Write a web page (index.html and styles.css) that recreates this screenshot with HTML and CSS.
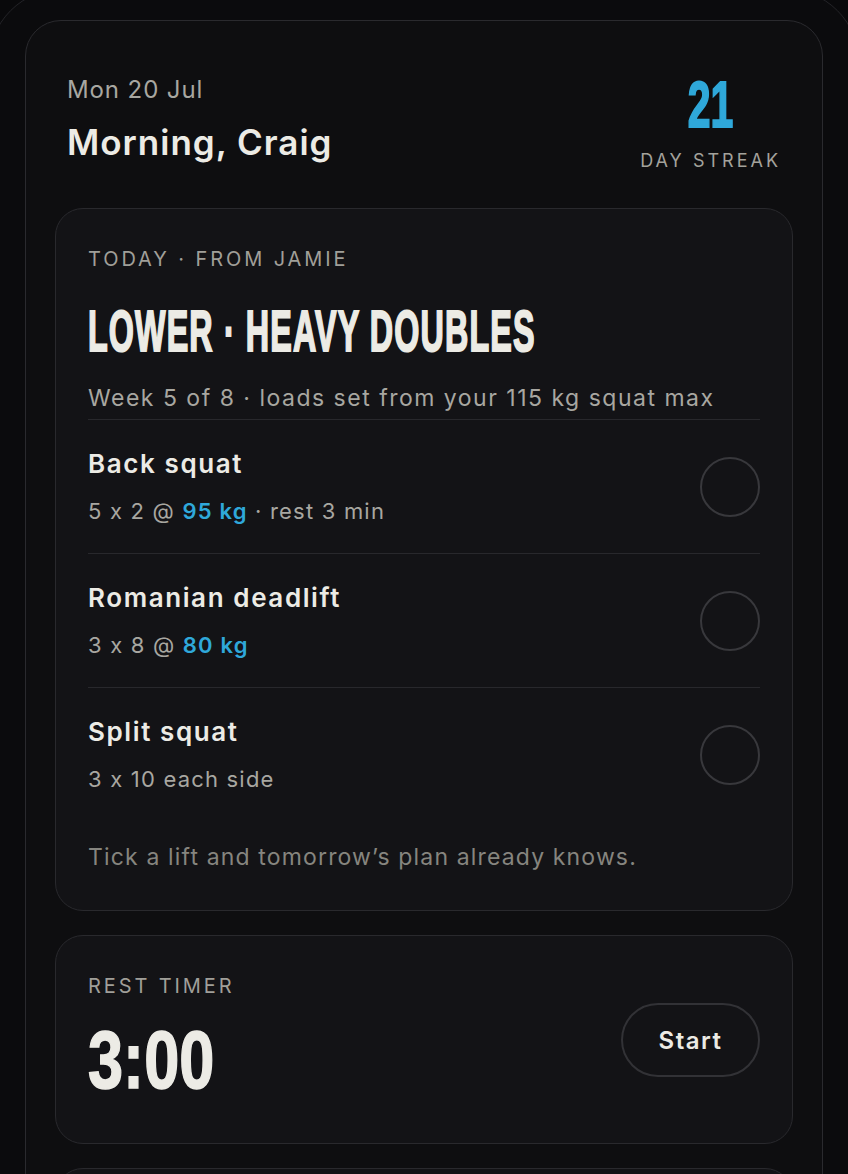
FILE: index.html
```html
<!DOCTYPE html>
<html lang="en">

<head>
  <meta charset="UTF-8">
  <meta name="viewport" content="width=device-width, initial-scale=1.0">
  <title>Today</title>
  <link rel="stylesheet" href="styles.css">
</head>

<body>
  <div class="device">
    <div class="screen">
      <header class="top">
        <div class="greeting">
          <div class="date">Mon 20 Jul</div>
          <h1 class="hello">Morning, Craig</h1>
        </div>
        <div class="streak">
          <div class="streak-num"><span class="display">21</span></div>
          <div class="streak-label">DAY STREAK</div>
        </div>
      </header>

      <section class="card today">
        <div class="eyebrow">TODAY · FROM JAMIE</div>
        <h2 class="workout-title"><span class="display">LOWER · HEAVY DOUBLES</span></h2>
        <p class="workout-meta">Week 5 of 8 · loads set from your 115 kg squat max</p>

        <div class="lift">
          <div>
            <div class="lift-name">Back squat</div>
            <div class="lift-detail">5 x 2 @ <b class="load">95 kg</b> · rest 3 min</div>
          </div>
          <span class="tick"></span>
        </div>
        <div class="lift">
          <div>
            <div class="lift-name">Romanian deadlift</div>
            <div class="lift-detail">3 x 8 @ <b class="load">80 kg</b></div>
          </div>
          <span class="tick"></span>
        </div>
        <div class="lift">
          <div>
            <div class="lift-name">Split squat</div>
            <div class="lift-detail">3 x 10 each side</div>
          </div>
          <span class="tick"></span>
        </div>

        <p class="note">Tick a lift and tomorrow’s plan already knows.</p>
      </section>

      <section class="card timer">
        <div>
          <div class="eyebrow">REST TIMER</div>
          <div class="timer-time"><span class="display">3:00</span></div>
        </div>
        <button class="btn">Start</button>
      </section>

      <section class="card next"></section>
    </div>
  </div>
</body>

</html>
```

FILE: styles.css
```css
body {
  margin: 0;
  background: #09090b;
  font-family: "Inter", "Noto Sans", sans-serif;
  font-feature-settings: "calt" 0;
  color: #ecebe5;
  overflow: hidden;
}

.device {
  margin: -12px -12px 0;
  padding: 31px 36px 0;
  border: 1px solid #242428;
  border-radius: 76px;
  background: #0b0b0d;
}

.screen {
  min-height: 1300px;
  padding: 0 29px;
  border: 1px solid #2a2a2e;
  border-radius: 36px;
  background: #0e0e10;
}

/* condensed display type for big numbers and titles */
.display {
  display: inline-block;
  white-space: nowrap;
  font-family: "Liberation Sans Narrow", "Liberation Sans", sans-serif;
  font-weight: 700;
  letter-spacing: 0;
  transform-origin: left center;
}

.top {
  display: flex;
  justify-content: space-between;
  align-items: flex-start;
  padding: 53px 12px 0;
  margin-bottom: 36px;
}

.date {
  font-size: 24px;
  line-height: 1.3;
  letter-spacing: 0.9px;
  color: #a8a7a1;
}

.hello {
  margin: 16px 0 0;
  font-size: 35px;
  line-height: 1.2;
  letter-spacing: 1px;
  font-weight: 600;
}

.streak {
  display: flex;
  flex-direction: column;
  align-items: center;
}

.streak-num {
  margin-top: -2px;
  margin-bottom: 2px;
  font-size: 64px;
  line-height: 1;
  color: #2fa8da;
}

.streak-num .display {
  transform-origin: center;
  transform: scaleX(0.64);
  -webkit-text-stroke: 2px currentColor;
}

.streak-label {
  margin-top: 10px;
  font-size: 18px;
  line-height: 1.3;
  letter-spacing: 3px;
  color: #a3a29c;
}

.card {
  border: 1px solid #29292d;
  border-radius: 28px;
  background: #131316;
  margin-bottom: 24px;
}

.eyebrow {
  font-size: 20px;
  line-height: 1.4;
  letter-spacing: 2.9px;
  color: #a09f99;
}

.today {
  padding: 36px 32px 37px;
}

.workout-title {
  margin: 26px 0 0;
  font-size: 58px;
  line-height: 1.1;
  font-weight: 700;
}

.workout-title .display {
  letter-spacing: 2px;
  transform: scaleX(0.557);
  -webkit-text-stroke: 2px currentColor;
}

.workout-meta {
  margin: 21px 0 5px;
  font-size: 23px;
  line-height: 1.3;
  letter-spacing: 1.5px;
  color: #a8a7a1;
}

.lift {
  display: flex;
  justify-content: space-between;
  align-items: center;
  height: 134px;
  box-sizing: border-box;
  border-top: 1px solid #28282c;
}

.lift-name {
  font-size: 26px;
  line-height: 1.25;
  letter-spacing: 1.6px;
  font-weight: 600;
}

.lift-detail {
  margin-top: 16px;
  font-size: 22px;
  line-height: 1.3;
  letter-spacing: 1.2px;
  color: #a8a7a1;
}

.load {
  font-weight: 600;
  color: #2fa8da;
}

.tick {
  width: 60px;
  height: 60px;
  box-sizing: border-box;
  border: 2px solid #38383c;
  border-radius: 50%;
}

.note {
  margin: 22px 0 0;
  font-size: 23px;
  line-height: 1.3;
  letter-spacing: 1.15px;
  color: #86857f;
}

.timer {
  display: flex;
  justify-content: space-between;
  align-items: center;
  padding: 36px 32px 42px;
}

.timer-time {
  margin-top: 18px;
  font-size: 82px;
  line-height: 1;
}

.timer-time .display {
  transform: scaleX(0.77);
  -webkit-text-stroke: 1.5px currentColor;
}

.btn {
  margin-top: 8px;
  width: 139px;
  height: 74px;
  border: 2px solid #323236;
  border-radius: 37px;
  background: transparent;
  font-family: inherit;
  font-size: 24px;
  font-weight: 600;
  letter-spacing: 1.5px;
  color: #ecebe5;
}

.next {
  height: 200px;
}
```
